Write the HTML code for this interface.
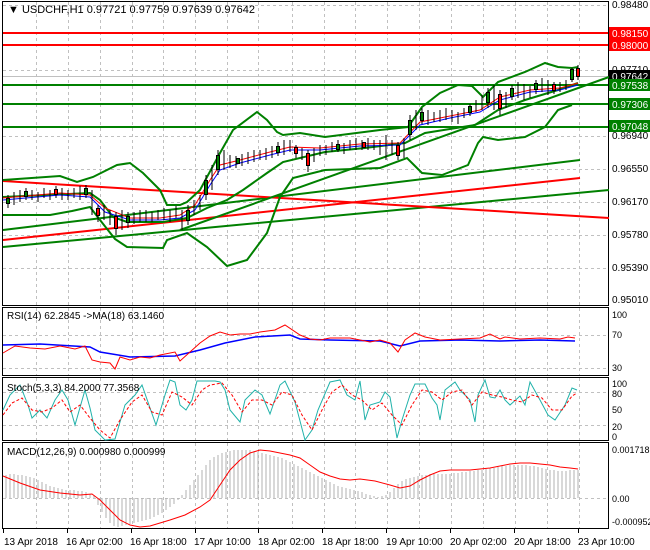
<!DOCTYPE html>
<html><head><style>
html,body{margin:0;padding:0;background:#fff;}
svg{display:block;font-family:"Liberation Sans",sans-serif;}
</style></head><body>
<svg width="650" height="550" viewBox="0 0 650 550" xmlns="http://www.w3.org/2000/svg">
<rect width="650" height="550" fill="#fff"/>
<g fill="none" stroke="#000" stroke-width="1">
<rect x="2.5" y="1.5" width="606" height="304"/>
<rect x="2.5" y="307.5" width="606" height="68"/>
<rect x="2.5" y="377.5" width="606" height="63"/>
<rect x="2.5" y="442.5" width="606" height="86"/>
</g>
<g stroke="#c0c0c0" stroke-dasharray="3,3" stroke-width="1">
<path d="M36.5 2V305M68.5 2V305M100.5 2V305M132.5 2V305M163.5 2V305M195.5 2V305M227.5 2V305M258.5 2V305M292.5 2V305M324.5 2V305M355.5 2V305M387.5 2V305M419.5 2V305M451.5 2V305M483.5 2V305M515.5 2V305M547.5 2V305M579.5 2V305"/>
<path d="M3 5.5H608M3 70.5H608M3 136.5H608M3 169.5H608M3 202.5H608M3 235.5H608M3 268.5H608"/>
<path d="M36.5 308V375M68.5 308V375M100.5 308V375M132.5 308V375M163.5 308V375M195.5 308V375M227.5 308V375M258.5 308V375M292.5 308V375M324.5 308V375M355.5 308V375M387.5 308V375M419.5 308V375M451.5 308V375M483.5 308V375M515.5 308V375M547.5 308V375M579.5 308V375"/>
<path d="M3 335.5H608M3 368.5H608"/>
<path d="M36.5 378V440M68.5 378V440M100.5 378V440M132.5 378V440M163.5 378V440M195.5 378V440M227.5 378V440M258.5 378V440M292.5 378V440M324.5 378V440M355.5 378V440M387.5 378V440M419.5 378V440M451.5 378V440M483.5 378V440M515.5 378V440M547.5 378V440M579.5 378V440"/>
<path d="M3 392.5H608M3 425.5H608"/>
<path d="M36.5 443V528M68.5 443V528M100.5 443V528M132.5 443V528M163.5 443V528M195.5 443V528M227.5 443V528M258.5 443V528M292.5 443V528M324.5 443V528M355.5 443V528M387.5 443V528M419.5 443V528M451.5 443V528M483.5 443V528M515.5 443V528M547.5 443V528M579.5 443V528"/>
<path d="M3 498.5H608"/>
</g>
<line x1="3" y1="76.5" x2="608" y2="76.5" stroke="#c0c0c0"/>
<g stroke-width="2">
<line x1="3" y1="33" x2="608" y2="33" stroke="#f00"/>
<line x1="3" y1="45" x2="608" y2="45" stroke="#f00"/>
<line x1="3" y1="85" x2="608" y2="85" stroke="#008000"/>
<line x1="3" y1="104" x2="608" y2="104" stroke="#008000"/>
<line x1="3" y1="127" x2="608" y2="127" stroke="#008000"/>
</g>
<g stroke-width="2" fill="none">
<path d="M3 247L609 190" stroke="#008000"/>
<path d="M3 230L580 160" stroke="#008000"/>
<path d="M3 240L580 178" stroke="#f00"/>
<path d="M3 181L609 218" stroke="#f00"/>
<path d="M180 230L609 77" stroke="#008000"/>
</g>
<g stroke="#008000" stroke-width="2" fill="none">
<path d="M3 180L60 176L77 182L93 177L117 165L130 163L143 173L160 190L167 205L180 205L187 202L200 190L220 153L233 130L257 112L267 120L277 132L283 135L300 133L325 137L380 130L408 127L422 107L440 93L458 85L472 86L483 97L498 82L525 72L545 63L558 67L572 68L578 67"/>
<path d="M3 197L90 193L100 200L113 217L127 222L163 222L187 218L207 208L227 200L243 190L267 173L283 162L325 152L365 148L405 143L425 133L475 125L498 110L525 100L558 90L578 83"/>
<path d="M3 215L50 215L72 211L90 207L100 220L115 239L127 247L163 248L167 240L187 233L207 247L227 266L247 260L267 233L280 197L293 178L325 170L380 168L407 158L422 173L442 175L468 165L478 143L483 137L498 140L525 137L545 127L558 110L572 105"/>
</g>
<g fill="none" stroke-width="1">
<path d="M3 200L60 195L90 197L105 212L130 220L160 220L180 218L195 210L210 185L220 170L240 163L270 155L290 150L320 150L360 146L400 145L420 125L450 118L480 112L500 100L530 92L560 90L578 85" stroke="#00f"/>
<path d="M3 198L60 193L90 195L105 208L130 218L160 218L180 215L195 205L210 180L220 165L240 160L270 152L290 147L320 148L360 144L400 143L420 122L450 116L480 110L500 97L530 90L560 88L578 83" stroke="#f00"/>
</g>
<g stroke="#000" stroke-width="1">
<path d="M8 195V208M14 192V205M20 190V202M26 188V200M32 190V200M38 192V202M44 188V198M50 190V200M56 186V198M62 188V200M68 190V200M74 188V198M80 186V200M86 185V198M92 190V215M98 205V222M104 205V220M110 210V225M116 212V235M122 210V230M128 212V228M134 212V224M140 210V222M146 210V222M152 212V222M158 210V220M164 208V220M170 210V222M176 206V218M182 210V230M188 205V225M194 200V215M200 195V210M206 175V200M212 165V190M218 150V175M224 150V170M230 155V168M236 156V168M242 154V166M248 152V164M254 150V162M260 150V160M266 148V160M272 146V158M278 142V156M284 140V155M290 140V152M296 145V158M302 148V160M308 150V172M314 148V162M320 145V156M326 145V155M332 142V152M338 140V152M344 143V154M350 140V150M356 138V150M362 140V150M368 138V150M374 140V150M380 140V155M386 135V160M392 140V155M398 142V160M404 138V158M410 115V140M416 110V130M422 108V124M428 110V125M434 112V122M440 110V122M446 108V120M452 110V122M458 112V124M464 108V118M470 104V116M476 100V112M482 95V110M488 88V108M494 85V110M500 90V115M506 92V108M512 85V100M518 82V98M524 84V100M530 86V98M536 80V94M542 78V92M548 80V95M554 82V94M560 82V92M566 80V90M572 68V82M578 65V80"/>
</g>
<g stroke="#000" stroke-width="1">
<rect x="6.5" y="198.5" width="3" height="5" fill="#008000"/><rect x="24.5" y="191.5" width="3" height="5" fill="#008000"/><rect x="54.5" y="189.5" width="3" height="5" fill="#f00"/><rect x="84.5" y="188.5" width="3" height="6" fill="#008000"/><rect x="96.5" y="208.5" width="3" height="7" fill="#f00"/><rect x="114.5" y="216.5" width="3" height="12" fill="#f00"/><rect x="126.5" y="216.5" width="3" height="6" fill="#008000"/><rect x="186.5" y="210.5" width="3" height="10" fill="#008000"/><rect x="204.5" y="180.5" width="3" height="14" fill="#008000"/><rect x="216.5" y="155.5" width="3" height="14" fill="#008000"/><rect x="236.5" y="158.5" width="3" height="5" fill="#008000"/><rect x="276.5" y="146.5" width="3" height="6" fill="#008000"/><rect x="294.5" y="147.5" width="3" height="6" fill="#f00"/><rect x="306.5" y="153.5" width="3" height="12" fill="#f00"/><rect x="336.5" y="144.5" width="3" height="5" fill="#008000"/><rect x="362.5" y="142.5" width="3" height="5" fill="#f00"/><rect x="396.5" y="145.5" width="3" height="10" fill="#f00"/><rect x="408.5" y="120.5" width="3" height="14" fill="#008000"/><rect x="420.5" y="112.5" width="3" height="8" fill="#008000"/><rect x="468.5" y="106.5" width="3" height="6" fill="#008000"/><rect x="486.5" y="92.5" width="3" height="10" fill="#008000"/><rect x="498.5" y="94.5" width="3" height="14" fill="#f00"/><rect x="510.5" y="88.5" width="3" height="8" fill="#008000"/><rect x="534.5" y="83.5" width="3" height="6" fill="#008000"/><rect x="552.5" y="84.5" width="3" height="6" fill="#f00"/><rect x="570.5" y="69.5" width="3" height="10" fill="#008000"/><rect x="576.5" y="68.5" width="3" height="8" fill="#f00"/>
</g>
<text x="8" y="13" font-size="11">&#9660; USDCHF,H1  0.97721 0.97759 0.97639 0.97642</text>
<g font-size="10" fill="#000">
<text x="612" y="8">0.98480</text><text x="612" y="73">0.97710</text><text x="612" y="139">0.96940</text><text x="612" y="172">0.96550</text><text x="612" y="205">0.96170</text><text x="612" y="238">0.95780</text><text x="612" y="271">0.95390</text><text x="612" y="303">0.95010</text>
</g>
<rect x="609" y="27" width="41" height="12" fill="#f00"/><text x="612" y="37" font-size="10" fill="#fff">0.98150</text>
<rect x="609" y="39" width="41" height="12" fill="#f00"/><text x="612" y="49" font-size="10" fill="#fff">0.98000</text>
<rect x="609" y="70" width="41" height="12" fill="#000"/><text x="612" y="80" font-size="10" fill="#fff">0.97642</text>
<rect x="609" y="79" width="41" height="12" fill="#008000"/><text x="612" y="89" font-size="10" fill="#fff">0.97538</text>
<rect x="609" y="98" width="41" height="12" fill="#008000"/><text x="612" y="108" font-size="10" fill="#fff">0.97306</text>
<rect x="609" y="120" width="41" height="12" fill="#008000"/><text x="612" y="130" font-size="10" fill="#fff">0.97048</text>
<path d="M3 345L40 344L90 347L100 352L130 357L175 356L200 350L225 343L255 337L290 335L300 339L330 340L380 341L400 346L420 341L460 340L500 341L540 340L575 341" stroke="#00f" stroke-width="1.5" fill="none"/>
<path d="M3 353L15 346L30 348L45 349L60 346L75 349L85 346L92 360L100 362L110 363L115 369L120 357L130 360L140 357L150 358L160 355L175 352L180 361L190 352L200 343L210 336L220 332L230 335L240 334L250 334L260 332L275 330L285 325L300 335L310 339L320 340L330 338L350 338L370 342L380 340L390 343L398 352L405 340L415 333L425 337L440 340L460 339L480 338L490 334L500 339L505 337L520 339L540 338L560 339L568 337L575 338" stroke="#f00" stroke-width="1" fill="none"/>
<text x="7" y="319" font-size="10">RSI(14) 62.2845  -&gt;MA(18) 63.1460</text>
<g font-size="9"><text x="612" y="318">100</text><text x="612" y="338">70</text><text x="612" y="371">30</text></g>
<path d="M3 410L10 395L20 385L28 405L32 418L40 410L47 418L55 400L62 390L68 400L75 425L85 390L90 408L95 430L105 440L115 439L125 405L135 395L142 385L150 408L156 425L165 395L170 380L175 382L180 405L186 410L192 400L197 381L205 381L215 381L220 382L225 390L230 410L240 422L245 400L255 390L262 395L270 414L280 385L285 381L295 402L305 440L312 430L318 410L330 382L340 380L347 395L355 400L360 381L365 420L370 405L380 402L385 392L390 397L397 438L402 420L410 395L415 384L425 384L432 398L437 405L440 420L445 390L455 382L460 390L470 400L475 422L478 395L485 380L490 397L495 398L500 390L505 400L510 405L520 396L525 405L530 382L540 400L548 415L555 420L565 405L572 388L577 390" stroke="#20b2aa" stroke-width="1" fill="none"/>
<path d="M3 415L12 403L22 398L32 410L42 412L52 408L62 400L70 412L80 405L90 418L100 430L110 438L120 420L132 402L142 395L152 412L162 415L172 392L182 397L192 405L202 390L210 385L222 383L232 395L242 412L252 400L262 400L272 405L282 392L292 395L302 415L312 430L322 410L332 392L342 385L352 395L362 400L372 410L382 403L392 415L402 425L412 405L422 390L432 392L442 400L452 392L462 390L472 405L482 392L492 395L502 397L512 400L522 402L532 395L542 398L552 410L562 410L572 396L577 393" stroke="#f00" stroke-width="1" stroke-dasharray="3,2" fill="none"/>
<text x="7" y="391" font-size="10">Stoch(5,3,3) 84.2000 77.3568</text>
<g font-size="9"><text x="612" y="387">100</text><text x="612" y="397">80</text><text x="612" y="413">50</text><text x="612" y="430">20</text><text x="612" y="440">0</text></g>
<g stroke="#b0b0b0" stroke-width="1">
<path d="M6 498V475M10 498V474M14 498V474M18 498V475M22 498V475M26 498V476M30 498V477M34 498V478M38 498V480M42 498V482M46 498V484M50 498V486M54 498V487M58 498V488M62 498V489M66 498V490M70 498V490M74 498V490M78 498V491M82 498V491M86 498V492M90 498V494M94 498V495M98 498V505M102 498V512M106 498V518M110 498V523M114 498V526M118 498V527M122 498V526M126 498V525M130 498V524M134 498V523M138 498V522M142 498V521M146 498V520M150 498V519M154 498V517M158 498V515M162 498V513M166 498V510M170 498V507M174 498V504M178 498V500M182 498V495M186 498V490M190 498V485M194 498V480M198 498V475M202 498V470M206 498V465M210 498V460M214 498V457M218 498V455M222 498V453M226 498V452M230 498V451M234 498V450M238 498V450M242 498V450M246 498V450M250 498V450M254 498V451M258 498V452M262 498V453M266 498V454M270 498V455M274 498V456M278 498V457M282 498V458M286 498V460M290 498V462M294 498V464M298 498V466M302 498V468M306 498V470M310 498V472M314 498V474M318 498V476M322 498V478M326 498V480M330 498V482M334 498V484M338 498V486M342 498V487M346 498V488M350 498V489M354 498V490M358 498V491M362 498V492M366 498V494M370 498V495M374 498V496M378 498V497M382 498V496M386 498V495M390 498V492M394 498V488M398 498V484M402 498V481M406 498V479M410 498V478M414 498V477M418 498V476M422 498V475M426 498V475M430 498V474M434 498V474M438 498V474M442 498V474M446 498V474M450 498V474M454 498V473M458 498V473M462 498V472M466 498V472M470 498V471M474 498V471M478 498V470M482 498V470M486 498V469M490 498V468M494 498V468M498 498V467M502 498V466M506 498V466M510 498V465M514 498V465M518 498V465M522 498V465M526 498V465M530 498V466M534 498V466M538 498V467M542 498V468M546 498V469M550 498V470M554 498V470M558 498V471M562 498V471M566 498V471M570 498V470M574 498V470M578 498V470"/>
</g>
<path d="M3 476L20 483L40 490L60 493L80 495L92 494L100 500L110 510L120 520L130 525L140 527L150 526L160 523L170 520L185 515L200 507L210 500L220 485L230 470L240 460L250 453L260 450L270 451L280 453L290 455L300 458L310 465L320 472L330 476L340 479L350 480L360 479L375 481L390 485L400 488L410 486L420 480L430 475L440 471L450 470L460 470L470 470L480 469L490 468L500 466L510 464L520 463L530 463L540 464L550 465L560 467L570 468L578 469" stroke="#f00" stroke-width="1" fill="none"/>
<text x="7" y="455" font-size="10">MACD(12,26,9) 0.000980 0.000999</text>
<g font-size="9"><text x="612" y="453">0.001718</text><text x="612" y="502">0.00</text><text x="612" y="525">-0.000952</text></g>
<g stroke="#000"><path d="M3.5 529V533M67.5 529V533M131.5 529V533M195.5 529V533M258.5 529V533M322.5 529V533M386.5 529V533M450.5 529V533M514.5 529V533M578.5 529V533"/></g>
<g font-size="10"><text x="4" y="545">13 Apr 2018</text><text x="66" y="545">16 Apr 02:00</text><text x="130" y="545">16 Apr 18:00</text><text x="194" y="545">17 Apr 10:00</text><text x="258" y="545">18 Apr 02:00</text><text x="322" y="545">18 Apr 18:00</text><text x="386" y="545">19 Apr 10:00</text><text x="450" y="545">20 Apr 02:00</text><text x="514" y="545">20 Apr 18:00</text><text x="578" y="545">23 Apr 10:00</text></g>
</svg>
</body></html>
